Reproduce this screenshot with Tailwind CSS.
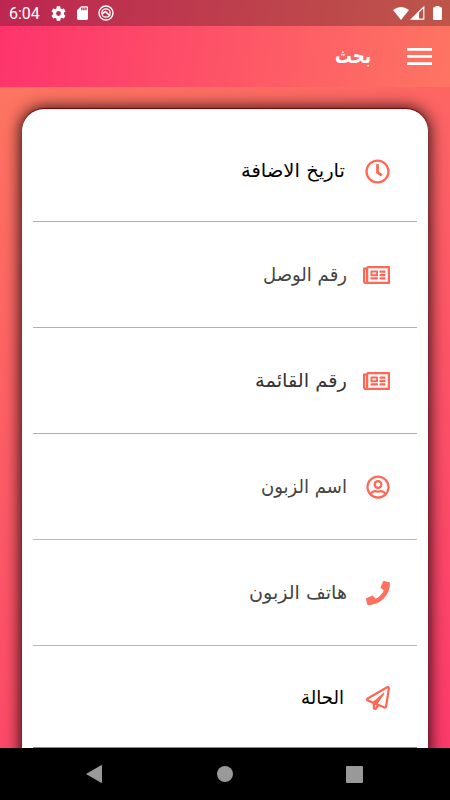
<!DOCTYPE html>
<html lang="ar">
<head>
<meta charset="utf-8">
<title>بحث</title>
<script src="https://cdn.jsdelivr.net/npm/@tailwindcss/browser@4"></script>
</head>
<body class="w-[450px] h-[800px] overflow-hidden flex flex-col bg-black font-['DejaVu_Sans',sans-serif]">
<div class="h-[87px] shrink-0 bg-[linear-gradient(100deg,#fd336c_0%,#fd7562_100%)]">
  <div class="h-[26px] bg-black/25 flex items-center justify-between pl-[9px] pr-[8px] text-white">
    <div class="flex items-center">
      <span class="w-[42px] font-[Roboto,sans-serif] text-[16px] leading-[26px] pt-[1px]">6:04</span>
      <svg class="w-[15px] h-[15px]" viewBox="2 2 20 20" fill="currentColor"><path d="M19.140 12.940a7 7 0 0 0 0-1.880l2.030-1.580a.5.5 0 0 0 .120-.610l-1.920-3.320a.5.5 0 0 0-.590-.220l-2.390.960a7 7 0 0 0-1.620-.940l-.360-2.540a.5.5 0 0 0-.480-.410h-3.840a.5.500 0 0 0-.470.410l-.360 2.540a7 7 0 0 0-1.620.940l-2.390-.960a.5.500 0 0 0-.590.220L2.740 8.870a.5.500 0 0 0 .120.610l2.030 1.580a7 7 0 0 0 0 1.880l-2.030 1.580a.5.500 0 0 0-.120.610l1.920 3.320c.120.220.370.290.590.220l2.390-.960c.500.380 1.030.700 1.620.940l.360 2.540c.050.240.240.410.480.410h3.840c.240 0 .440-.170.470-.410l.360-2.540a7 7 0 0 0 1.620-.940l2.390.960c.220.080.470 0 .590-.220l1.920-3.320a.5.500 0 0 0-.120-.610zM12 15.200A3.200 3.200 0 1 1 12 8.800a3.200 3.200 0 0 1 0 6.400z"/></svg>
      <svg class="w-[11px] h-[14px] ml-[11px]" viewBox="4 2 16 20" fill="currentColor"><path fill-rule="evenodd" d="M18 2h-8L4.020 8 4 20a2 2 0 0 0 2 2h12a2 2 0 0 0 2-2V4a2 2 0 0 0-2-2zm-6 6h-2V4h2zm3 0h-2V4h2zm3 0h-2V4h2z"/></svg>
      <svg class="w-[16px] h-[16px] ml-[10px]" viewBox="0 0 16 16" fill="none" stroke="currentColor"><circle cx="8" cy="8" r="7" stroke-width="1.400"/><circle cx="8" cy="8" r="4.200" stroke-width="1.300"/><path d="M4.500 8.500 7.500 6.500 12 11" stroke-width="1.700"/></svg>
    </div>
    <div class="flex items-center">
      <svg class="w-[16px] h-[13px]" viewBox="0 0 16 13" fill="currentColor"><path d="M0 3Q8-3 16 3L8 13z"/></svg>
      <svg class="w-[15px] h-[14px] ml-[1px]" viewBox="0 0 15 14"><path d="M1.500 13.200H13.800V1z" fill="none" stroke="#fff" stroke-width="1.200"/><path d="M1 13.500 9 5.500v8z" fill="#fff"/></svg>
      <svg class="w-[9px] h-[14px] ml-[8px]" viewBox="0 0 9 14" fill="currentColor"><path d="M2.500 0h4v1.200H8a1 1 0 0 1 1 1V13a1 1 0 0 1-1 1H1a1 1 0 0 1-1-1V2.200a1 1 0 0 1 1-1h1.500z"/></svg>
    </div>
  </div>
  <div class="h-[61px] flex flex-row-reverse items-center pr-[18px] text-white">
    <svg class="w-[25px] h-[17px]" viewBox="0 0 25 17" fill="currentColor"><path d="M0 0h25v2.700H0zM0 7.100h25v2.700H0zM0 14.200h25v2.800H0z"/></svg>
    <svg class="w-[35px] h-[40px] mr-[37px] overflow-visible"><text x="0" y="26" direction="ltr" textLength="36" lengthAdjust="spacingAndGlyphs" class="text-[21px] font-bold fill-white">بحث</text></svg>
  </div>
</div>
<main class="h-[661px] shrink-0 overflow-hidden px-[22px] pt-[22px] bg-[linear-gradient(152deg,#fd7561_0%,#fc3a6b_100%)]">
  <div class="h-[700px] rounded-[22px] bg-white px-[11px] shadow-[0_-1px_0_0_#800000,0_0_16px_1px_rgba(0,0,0,0.9)] text-[#ff6654]">
    <section class="h-[113px] border-b border-[#b0b0b0] flex flex-row-reverse items-center pr-[27px] pt-[12px]">
      <svg class="w-[25px] h-[25px]" viewBox="0 0 512 512" fill="currentColor"><path d="M256 8C119 8 8 119 8 256s111 248 248 248 248-111 248-248S393 8 256 8zm0 448c-110.500 0-200-89.500-200-200S145.500 56 256 56s200 89.500 200 200-89.500 200-200 200zm61.800-104.400l-84.900-61.700c-3.100-2.300-4.900-5.900-4.900-9.700V116c0-6.600 5.400-12 12-12h32c6.600 0 12 5.400 12 12v141.700l66.800 48.600c5.400 3.900 6.500 11.400 2.600 16.800L334.600 349c-3.900 5.300-11.400 6.500-16.800 2.600z"/></svg>
      <svg class="w-[104px] h-[40px] mr-[20px] overflow-visible"><text x="0" y="26" textLength="104" lengthAdjust="spacingAndGlyphs" class="text-[19px] fill-black">تاريخ الاضافة</text></svg>
    </section>
    <section class="h-[106px] border-b border-[#b0b0b0] flex flex-row-reverse items-center pr-[27px] pt-[1px]">
      <svg class="w-[27px] h-[24px]" viewBox="0 0 576 512" fill="currentColor"><path d="M552 64H112c-20.858 0-38.643 13.377-45.248 32H24c-13.255 0-24 10.745-24 24v272c0 30.928 25.072 56 56 56h496c13.255 0 24-10.745 24-24V88c0-13.255-10.745-24-24-24zM48 392V144h16v248c0 4.411-3.589 8-8 8s-8-3.589-8-8zm480 8H111.422c.374-2.614.578-5.283.578-8V112h416v288zM172 280h136c6.627 0 12-5.373 12-12v-96c0-6.627-5.373-12-12-12H172c-6.627 0-12 5.373-12 12v96c0 6.627 5.373 12 12 12zm28-80h80v40h-80v-40zm-40 140v-24c0-6.627 5.373-12 12-12h136c6.627 0 12 5.373 12 12v24c0 6.627-5.373 12-12 12H172c-6.627 0-12-5.373-12-12zm192 0v-24c0-6.627 5.373-12 12-12h104c6.627 0 12 5.373 12 12v24c0 6.627-5.373 12-12 12H364c-6.627 0-12-5.373-12-12zm0-144v-24c0-6.627 5.373-12 12-12h104c6.627 0 12 5.373 12 12v24c0 6.627-5.373 12-12 12H364c-6.627 0-12-5.373-12-12zm0 72v-24c0-6.627 5.373-12 12-12h104c6.627 0 12 5.373 12 12v24c0 6.627-5.373 12-12 12H364c-6.627 0-12-5.373-12-12z"/></svg>
      <svg class="w-[84px] h-[40px] mr-[16px] overflow-visible"><text x="0" y="26" textLength="84" lengthAdjust="spacingAndGlyphs" class="text-[19px] fill-[#444]">رقم الوصل</text></svg>
    </section>
    <section class="h-[106px] border-b border-[#b0b0b0] flex flex-row-reverse items-center pr-[27px] pt-[1px]">
      <svg class="w-[27px] h-[24px]" viewBox="0 0 576 512" fill="currentColor"><path d="M552 64H112c-20.858 0-38.643 13.377-45.248 32H24c-13.255 0-24 10.745-24 24v272c0 30.928 25.072 56 56 56h496c13.255 0 24-10.745 24-24V88c0-13.255-10.745-24-24-24zM48 392V144h16v248c0 4.411-3.589 8-8 8s-8-3.589-8-8zm480 8H111.422c.374-2.614.578-5.283.578-8V112h416v288zM172 280h136c6.627 0 12-5.373 12-12v-96c0-6.627-5.373-12-12-12H172c-6.627 0-12 5.373-12 12v96c0 6.627 5.373 12 12 12zm28-80h80v40h-80v-40zm-40 140v-24c0-6.627 5.373-12 12-12h136c6.627 0 12 5.373 12 12v24c0 6.627-5.373 12-12 12H172c-6.627 0-12-5.373-12-12zm192 0v-24c0-6.627 5.373-12 12-12h104c6.627 0 12 5.373 12 12v24c0 6.627-5.373 12-12 12H364c-6.627 0-12-5.373-12-12zm0-144v-24c0-6.627 5.373-12 12-12h104c6.627 0 12 5.373 12 12v24c0 6.627-5.373 12-12 12H364c-6.627 0-12-5.373-12-12zm0 72v-24c0-6.627 5.373-12 12-12h104c6.627 0 12 5.373 12 12v24c0 6.627-5.373 12-12 12H364c-6.627 0-12-5.373-12-12z"/></svg>
      <svg class="w-[92px] h-[40px] mr-[16px] overflow-visible"><text x="0" y="26" textLength="92" lengthAdjust="spacingAndGlyphs" class="text-[19px] fill-[#333]">رقم القائمة</text></svg>
    </section>
    <section class="h-[106px] border-b border-[#bbb] flex flex-row-reverse items-center pr-[27px] pt-[1px]">
      <svg class="w-[24px] h-[24px]" viewBox="0 0 496 512" fill="currentColor"><path d="M248 104c-53 0-96 43-96 96s43 96 96 96 96-43 96-96-43-96-96-96zm0 144c-26.500 0-48-21.500-48-48s21.500-48 48-48 48 21.500 48 48-21.500 48-48 48zm0-240C111 8 0 119 0 256s111 248 248 248 248-111 248-248S385 8 248 8zm0 448c-49.700 0-95.100-18.300-130.100-48.400 14.900-23 40.400-38.600 69.600-39.500 20.800 6.400 40.600 9.600 60.500 9.600s39.700-3.100 60.500-9.600c29.200 1 54.700 16.500 69.600 39.500-35 30.100-80.400 48.400-130.100 48.400zm162.700-84.100c-24.400-31.400-62.100-51.900-105.100-51.900-10.200 0-26 9.600-57.600 9.600-31.500 0-47.400-9.600-57.600-9.600-42.900 0-80.600 20.500-105.100 51.900C61.900 339.200 48 299.200 48 256c0-110.300 89.700-200 200-200s200 89.700 200 200c0 43.200-13.900 83.200-37.300 115.900z"/></svg>
      <svg class="w-[86px] h-[40px] mr-[19px] overflow-visible"><text x="0" y="26" textLength="86" lengthAdjust="spacingAndGlyphs" class="text-[19px] fill-[#444]">اسم الزبون</text></svg>
    </section>
    <section class="h-[106px] border-b border-[#bbb] flex flex-row-reverse items-center pr-[27px] pt-[1px]">
      <svg class="w-[24px] h-[24px]" viewBox="0 0 512 512" fill="#ff705f"><path d="M493.400 24.600l-104-24c-11.300-2.600-22.900 3.300-27.500 13.900l-48 112c-4.200 9.800-1.400 21.300 6.900 28l60.600 49.600c-36 76.700-98.900 140.500-177.200 177.200l-49.600-60.600c-6.800-8.300-18.200-11.100-28-6.900l-112 48C3.900 366.500-2 378.100.6 389.400l24 104C27.100 504.200 36.700 512 48 512c256.100 0 464-207.500 464-464 0-11.200-7.700-20.900-18.600-23.400z"/></svg>
      <svg class="w-[98px] h-[40px] mr-[19px] overflow-visible"><text x="0" y="26" textLength="98" lengthAdjust="spacingAndGlyphs" class="text-[19px] fill-[#444]">هاتف الزبون</text></svg>
    </section>
    <section class="h-[102px] border-b border-[#888] flex flex-row-reverse items-center pr-[27px] pt-[2px]">
      <svg class="w-[24px] h-[24px]" viewBox="0 0 512 512" fill="currentColor"><path d="M440 6.500L24 246.400c-34.400 19.900-31.100 70.800 5.700 85.900L144 379.600V464c0 46.400 59.200 65.500 86.600 28.600l43.800-59.100 111.900 46.200c5.900 2.400 12.100 3.600 18.300 3.600 8.200 0 16.300-2.100 23.600-6.200 12.800-7.200 21.600-20 23.900-34.500l59.400-387.200c6.100-40.100-36.900-68.800-71.500-48.900zM192 464v-64.600l36.600 15.100L192 464zm212.600-28.700l-153.800-63.500L391 169.500c10.700-15.500-9.500-33.500-23.700-21.200L155.800 332.600 48 288 464 48l-59.400 387.300z"/></svg>
      <svg class="w-[43px] h-[40px] mr-[22px] overflow-visible"><text x="0" y="26" textLength="43" lengthAdjust="spacingAndGlyphs" class="text-[19px] fill-black">الحالة</text></svg>
    </section>
  </div>
</main>
<nav class="h-[52px] shrink-0 flex items-center justify-between pl-[86px] pr-[87px]">
  <svg class="w-[16px] h-[18px]" viewBox="0 0 16 18" fill="#999"><path d="M0 9 15 .2q1-.4 1 .6v16.400q0 1-1 .6z"/></svg>
  <div class="w-[16px] h-[16px] rounded-full bg-[#999] ml-[1px]"></div>
  <div class="w-[17px] h-[17px] rounded-[1px] bg-[#999]"></div>
</nav>
</body>
</html>
